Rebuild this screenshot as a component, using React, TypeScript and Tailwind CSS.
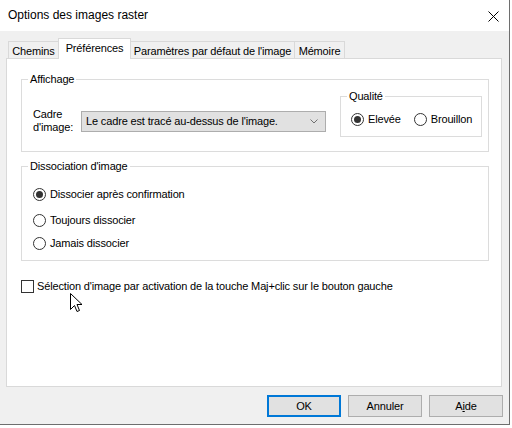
import React from "react";

/* Windows-style radio */
function Radio({ checked, label }: { checked?: boolean; label: string }) {
  return (
    <div className="flex items-center h-[14px]">
      <span className="w-[13px] h-[13px] rounded-full border border-[#333333] bg-white flex items-center justify-center shrink-0">
        {checked && <span className="w-[7px] h-[7px] rounded-full bg-[#333333]" />}
      </span>
      <span className="ml-[4px] leading-[14px] whitespace-nowrap">{label}</span>
    </div>
  );
}

function Tab({ label, w, active }: { label: string; w: string; active?: boolean }) {
  if (active) {
    return (
      <div
        className={`${w} h-[21px] -mb-px -ml-px relative z-10 bg-white border border-b-0 border-[#d9d9d9] flex items-center justify-center pb-[2px] whitespace-nowrap`}
      >
        {label}
      </div>
    );
  }
  return (
    <div
      className={`${w} h-[17px] -ml-px bg-[#f0f0f0] border border-b-0 border-[#d9d9d9] flex items-center justify-center pt-[2px] whitespace-nowrap`}
    >
      {label}
    </div>
  );
}

function Button({ label, primary }: { label: React.ReactNode; primary?: boolean }) {
  return (
    <button
      className={`w-[74px] h-[22px] bg-[#e1e1e1] flex items-center justify-center ${
        primary ? "border-2 border-[#0078d7]" : "border border-[#adadad]"
      }`}
    >
      {label}
    </button>
  );
}

export default function App() {
  return (
    <div
      className="w-[512px] h-[428px] bg-white relative text-[11px] tracking-[-0.15px] text-black"
      style={{ fontFamily: '"Liberation Sans", Arial, sans-serif' }}
    >
      <div className="w-[510px] h-[425px] border-r border-b border-[#6e6e6e] bg-[#f0f0f0] flex flex-col">
        {/* TITLE BAR */}
        <div className="h-[31px] bg-white flex items-center justify-between pl-[8px] pr-[10px] shrink-0">
          <span className="text-[12px] tracking-normal leading-[15px]">Options des images raster</span>
          <svg width="11" height="11" viewBox="0 0 11 11" className="mt-px">
            <path d="M0.5 0.5 L10.5 10.5 M10.5 0.5 L0.5 10.5" stroke="#000" strokeWidth="1" />
          </svg>
        </div>

        {/* TABS */}
        <div className="mt-[7px] h-[20px] flex items-end pl-[9px] shrink-0">
          <Tab label="Chemins" w="w-[51px]" />
          <Tab label="Préférences" w="w-[73px]" active />
          <Tab label="Paramètres par défaut de l'image" w="w-[165px]" />
          <Tab label="Mémoire" w="w-[51px]" />
        </div>

        {/* PANEL */}
        <div className="ml-[6px] w-[496px] h-[329px] bg-white border border-[#d9d9d9] pt-[13px] pl-[14px] shrink-0 relative">
          {/* Affichage */}
          <fieldset className="w-[468px] h-[80px] border border-[#dcdcdc]">
            <legend className="ml-[6px] px-[2px] leading-[14px]">Affichage</legend>
            <div className="flex items-start">
              <div className="mt-[22px] ml-[11px] flex items-center">
                <span className="w-[48px] leading-[13px]">
                  Cadre
                  <br />
                  d'image:
                </span>
                <div className="w-[245px] h-[21px] bg-[#e1e1e1] border border-[#adadad] flex items-center justify-between pl-[4px] pr-[7px]">
                  <span>Le cadre est tracé au-dessus de l'image.</span>
                  <svg width="8" height="5" viewBox="0 0 8 5">
                    <polyline points="0.5,0.5 4,4 7.5,0.5" fill="none" stroke="#707070" strokeWidth="1" />
                  </svg>
                </div>
              </div>
              <fieldset className="ml-auto mr-[6px] mt-[3px] w-[142px] h-[48px] border border-[#dcdcdc]">
                <legend className="ml-[6px] px-[2px] leading-[14px]">Qualité</legend>
                <div className="flex items-center pl-[10px] pt-[9px] gap-[13px]">
                  <Radio checked label="Elevée" />
                  <Radio label="Brouillon" />
                </div>
              </fieldset>
            </div>
          </fieldset>

          {/* Dissociation */}
          <fieldset className="mt-[7px] w-[468px] h-[102px] border border-[#dcdcdc]">
            <legend className="ml-[6px] px-[2px] leading-[14px]">Dissociation d'image</legend>
            <div className="flex flex-col pl-[11px] pt-[14px]">
              <Radio checked label="Dissocier après confirmation" />
              <div className="mt-[12px]">
                <Radio label="Toujours dissocier" />
              </div>
              <div className="mt-[9px]">
                <Radio label="Jamais dissocier" />
              </div>
            </div>
          </fieldset>

          {/* Checkbox */}
          <div className="mt-[18px] flex items-center h-[14px]">
            <span className="w-[13px] h-[13px] border border-[#333333] bg-white shrink-0" />
            <span className="ml-[3px] leading-[14px]">
              Sélection d'image par activation de la touche Maj+clic sur le bouton gauche
            </span>
          </div>
        </div>

        {/* BUTTONS */}
        <div className="mt-[8px] flex justify-end gap-[7px] pr-[6px]">
          <Button label="OK" primary />
          <Button label="Annuler" />
          <Button
            label={
              <span>
                A<span className="underline">i</span>de
              </span>
            }
          />
        </div>
      </div>

      {/* mouse cursor */}
      <svg
        className="absolute left-[70px] top-[293px]"
        width="13"
        height="20"
        viewBox="0 0 13 20"
      >
        <path
          d="M0.5 0.5 L0.5 16.5 L4.5 12.5 L7 18.5 L9.5 17.5 L7 11.5 L12 11.5 Z"
          fill="#fff"
          stroke="#000"
          strokeWidth="1"
          strokeLinejoin="miter"
        />
      </svg>
    </div>
  );
}
